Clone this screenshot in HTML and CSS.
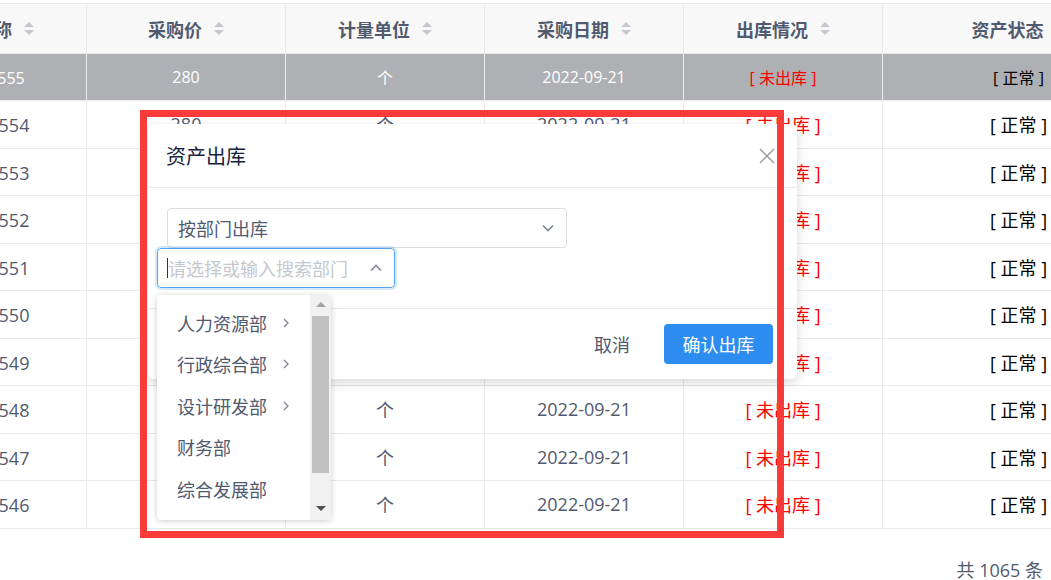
FILE: index.html
```html
<!DOCTYPE html>
<html>
    <head>
        <meta charset="utf-8">
        <title>资产出库</title>
        <link rel="stylesheet" href="styles.css">
    </head>

    <body>

        <div class="page">

            <div class="grid">

                <div class="row head">
                    <div class="cell c1">资产名称<i class="sort"></i></div>
                    <div class="cell">采购价<i class="sort"></i></div>
                    <div class="cell">计量单位<i class="sort"></i></div>
                    <div class="cell">采购日期<i class="sort"></i></div>
                    <div class="cell">出库情况<i class="sort"></i></div>
                    <div class="cell c6">资产状态<i class="sort"></i></div>
                </div>

                <div class="row picked">
                    <div class="cell c1">笔记本555</div>
                    <div class="cell">280</div>
                    <div class="cell">个</div>
                    <div class="cell">2022-09-21</div>
                    <div class="cell out">[ 未出库 ]</div>
                    <div class="cell c6 ok">[ 正常 ]</div>
                </div>

                <div class="row">
                    <div class="cell c1">笔记本554</div>
                    <div class="cell">280</div>
                    <div class="cell">个</div>
                    <div class="cell">2022-09-21</div>
                    <div class="cell out">[ 未出库 ]</div>
                    <div class="cell c6 ok">[ 正常 ]</div>
                </div>

                <div class="row">
                    <div class="cell c1">笔记本553</div>
                    <div class="cell">280</div>
                    <div class="cell">个</div>
                    <div class="cell">2022-09-21</div>
                    <div class="cell out">[ 未出库 ]</div>
                    <div class="cell c6 ok">[ 正常 ]</div>
                </div>

                <div class="row">
                    <div class="cell c1">笔记本552</div>
                    <div class="cell">280</div>
                    <div class="cell">个</div>
                    <div class="cell">2022-09-21</div>
                    <div class="cell out">[ 未出库 ]</div>
                    <div class="cell c6 ok">[ 正常 ]</div>
                </div>

                <div class="row">
                    <div class="cell c1">笔记本551</div>
                    <div class="cell">280</div>
                    <div class="cell">个</div>
                    <div class="cell">2022-09-21</div>
                    <div class="cell out">[ 未出库 ]</div>
                    <div class="cell c6 ok">[ 正常 ]</div>
                </div>

                <div class="row">
                    <div class="cell c1">笔记本550</div>
                    <div class="cell">280</div>
                    <div class="cell">个</div>
                    <div class="cell">2022-09-21</div>
                    <div class="cell out">[ 未出库 ]</div>
                    <div class="cell c6 ok">[ 正常 ]</div>
                </div>

                <div class="row">
                    <div class="cell c1">笔记本549</div>
                    <div class="cell">280</div>
                    <div class="cell">个</div>
                    <div class="cell">2022-09-21</div>
                    <div class="cell out">[ 未出库 ]</div>
                    <div class="cell c6 ok">[ 正常 ]</div>
                </div>

                <div class="row">
                    <div class="cell c1">笔记本548</div>
                    <div class="cell">280</div>
                    <div class="cell">个</div>
                    <div class="cell">2022-09-21</div>
                    <div class="cell out">[ 未出库 ]</div>
                    <div class="cell c6 ok">[ 正常 ]</div>
                </div>

                <div class="row">
                    <div class="cell c1">笔记本547</div>
                    <div class="cell">280</div>
                    <div class="cell">个</div>
                    <div class="cell">2022-09-21</div>
                    <div class="cell out">[ 未出库 ]</div>
                    <div class="cell c6 ok">[ 正常 ]</div>
                </div>

                <div class="row">
                    <div class="cell c1">笔记本546</div>
                    <div class="cell">280</div>
                    <div class="cell">个</div>
                    <div class="cell">2022-09-21</div>
                    <div class="cell out">[ 未出库 ]</div>
                    <div class="cell c6 ok">[ 正常 ]</div>
                </div>

            </div>

            <div class="total">共 1065 条</div>

            <!-- 出库弹窗 -->
            <div class="modal">
                <div class="modal_head">
                    <span class="modal_title">资产出库</span>
                    <svg class="close" width="16" height="16" viewBox="0 0 16 16">
                        <path d="M1 1 L15 15 M15 1 L1 15" stroke="#999" stroke-width="1.4" fill="none"/>
                    </svg>
                </div>
                <div class="modal_body">
                    <div class="select">
                        <span>按部门出库</span>
                        <svg class="chev" width="12" height="8" viewBox="0 0 12 8">
                            <path d="M1 1.5 L6 6.5 L11 1.5" stroke="#808695" stroke-width="1.6" fill="none"/>
                        </svg>
                    </div>
                    <div class="select focus">
                        <span class="caret"></span>
                        <span class="holder">请选择或输入搜索部门</span>
                        <svg class="chev" width="12" height="8" viewBox="0 0 12 8">
                            <path d="M1 6.5 L6 1.5 L11 6.5" stroke="#808695" stroke-width="1.6" fill="none"/>
                        </svg>
                    </div>
                </div>
                <div class="modal_foot">
                    <button type="button" class="btn_text">取消</button>
                    <button type="button" class="btn_primary">确认出库</button>
                </div>
            </div>

            <!-- 部门下拉 -->
            <div class="drop">
                <ul class="drop_list">
                    <li>人力资源部<svg width="6" height="10" viewBox="0 0 6 10"><path d="M1 1 L5 5 L1 9" stroke="#808695" stroke-width="1.3" fill="none"/></svg></li>
                    <li>行政综合部<svg width="6" height="10" viewBox="0 0 6 10"><path d="M1 1 L5 5 L1 9" stroke="#808695" stroke-width="1.3" fill="none"/></svg></li>
                    <li>设计研发部<svg width="6" height="10" viewBox="0 0 6 10"><path d="M1 1 L5 5 L1 9" stroke="#808695" stroke-width="1.3" fill="none"/></svg></li>
                    <li>财务部</li>
                    <li>综合发展部</li>
                </ul>
                <div class="scroll">
                    <span class="arrow_up"></span>
                    <span class="thumb"></span>
                    <span class="arrow_down"></span>
                </div>
            </div>

            <div class="mark"></div>

        </div>

    </body>
</html>
```

FILE: styles.css
```css
body {
    margin: 0;
    background-color: #fff;
    font-family: "Open Sans", "Noto Sans CJK SC", sans-serif;
}

.page {
    position: relative;
    width: 1051px;
    height: 580px;
    overflow: hidden;
}

/* table */

.grid {
    margin-top: 3px;
    margin-left: -112px;
    border-top: 1px solid #e8eaec;
    width: 1267px;
}

.row {
    display: flex;
    height: 47.5px;
    box-sizing: border-box;
    border-bottom: 1px solid #e8eaec;
}

.cell {
    width: 199px;
    flex: none;
    box-sizing: border-box;
    border-right: 1px solid #e8eaec;
    display: flex;
    align-items: center;
    justify-content: center;
    font-size: 18px;
    color: #515a6e;
    white-space: nowrap;
}

.c6 {
    width: 272px;
}

.head {
    height: 50px;
    background-color: #f8f8f9;
}

.head .cell {
    font-weight: bold;
}

.picked {
    height: 47px;
    background-color: #aeb0b3;
}

.picked .cell {
    color: #fff;
    font-size: 16px;
}

.out {
    color: #f00 !important;
}

.ok {
    color: #000 !important;
}

.sort {
    display: inline-flex;
    flex-direction: column;
    gap: 3px;
    margin-left: 12px;
}

.sort::before, .sort::after {
    content: "";
    border-left: 5px solid transparent;
    border-right: 5px solid transparent;
}

.sort::before {
    border-bottom: 5px solid #c5c8ce;
}

.sort::after {
    border-top: 5px solid #c5c8ce;
}

.total {
    text-align: right;
    padding-right: 8px;
    margin-top: 29px;
    font-size: 18px;
    line-height: 24px;
    color: #515a6e;
}

/* modal */

.modal {
    position: absolute;
    left: 148px;
    top: 124px;
    width: 649px;
    background-color: #fff;
    border-radius: 6px;
    box-shadow: 0 4px 12px rgba(0, 0, 0, 0.15);
}

.modal_head {
    height: 64px;
    box-sizing: border-box;
    border-bottom: 1px solid #e8eaec;
    display: flex;
    align-items: center;
    justify-content: space-between;
    padding: 0 22px 0 18px;
}

.modal_title {
    font-size: 20px;
    color: #17233d;
}

.modal_body {
    padding: 20px 0 20px 19px;
    border-bottom: 1px solid #e8eaec;
}

.select {
    width: 400px;
    height: 40px;
    box-sizing: border-box;
    border: 1px solid #dcdee2;
    border-radius: 4px;
    display: flex;
    align-items: center;
    padding: 0 12px 0 10px;
    font-size: 18px;
    color: #515a6e;
}

.select span {
    flex: 1;
}

.select.focus {
    width: 238px;
    margin-left: -10px;
    border-color: #57a3f3;
    box-shadow: 0 0 0 2px rgba(45, 140, 240, 0.2);
    padding-left: 9px;
}

.select .caret {
    flex: none;
    width: 1px;
    height: 20px;
    background-color: #333;
}

.select .holder {
    color: #c5c8ce;
}

.modal_foot {
    height: 70px;
    display: flex;
    align-items: center;
    justify-content: flex-end;
    padding-right: 24px;
}

button {
    font-family: inherit;
    font-size: 18px;
    border: none;
    cursor: pointer;
}

.btn_text {
    background: none;
    color: #515a6e;
    padding: 0 18px;
    margin-right: 16px;
}

.btn_primary {
    width: 109px;
    height: 40px;
    border-radius: 4px;
    background-color: #2d8cf0;
    color: #fff;
}

/* dropdown */

.drop {
    position: absolute;
    left: 157px;
    top: 295px;
    width: 174px;
    height: 225px;
    background-color: #fff;
    border-radius: 4px;
    box-shadow: 0 1px 6px rgba(0, 0, 0, 0.2);
    display: flex;
    overflow: hidden;
}

.drop_list {
    flex: 1;
    list-style: none;
    margin: 0;
    padding: 7px 0 0 20px;
}

.drop_list li {
    height: 41.5px;
    display: flex;
    align-items: center;
    font-size: 18px;
    color: #515a6e;
}

.drop_list li svg {
    margin-left: 16px;
}

.scroll {
    width: 21px;
    background-color: #f1f1f1;
    display: flex;
    flex-direction: column;
    align-items: center;
}

.arrow_up, .arrow_down {
    border-left: 5px solid transparent;
    border-right: 5px solid transparent;
}

.arrow_up {
    margin-top: 7px;
    border-bottom: 5px solid #a3a3a3;
}

.arrow_down {
    margin-top: 33px;
    border-top: 5px solid #505050;
}

.thumb {
    margin-top: 9px;
    width: 17px;
    height: 157px;
    background-color: #c1c1c1;
}

/* annotation */

.mark {
    position: absolute;
    left: 140px;
    top: 110px;
    width: 644px;
    height: 428px;
    box-sizing: border-box;
    border: 7px solid #fb3a3a;
}
```
